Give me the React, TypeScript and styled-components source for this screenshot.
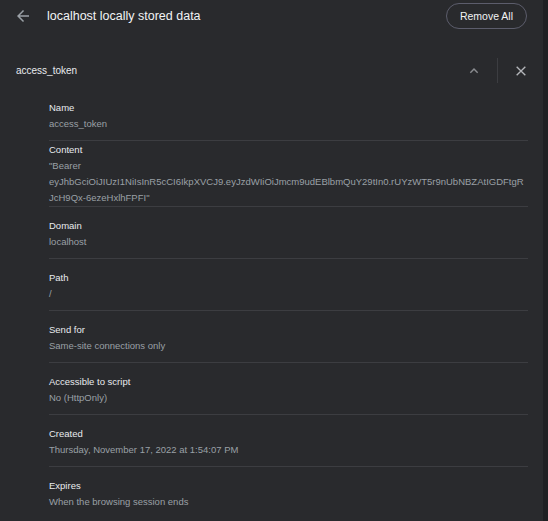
import styled, { createGlobalStyle } from "styled-components"

const GlobalStyle = createGlobalStyle`
    html, body {
        margin: 0;
        background: #292a2d;
    }
    body {
        font-family: "Liberation Sans", Arial, sans-serif;
        -webkit-font-smoothing: antialiased;
    }
`

const Page = styled.div`
    display: flex;
    min-height: 100vh;
`

const Main = styled.div`
    flex: 1;
    min-width: 0;
`

const ScrollTrack = styled.div`
    width: 5px;
    background: #1f2023;
`

const Header = styled.header`
    display: flex;
    align-items: center;
    height: 31px;
    padding: 0 16px 0 14px;
`

const IconButton = styled.button<{ $color?: string }>`
    display: flex;
    align-items: center;
    justify-content: center;
    width: 24px;
    height: 24px;
    padding: 0;
    border: none;
    background: none;
    color: ${p => p.$color || "#9aa0a6"};
    cursor: pointer;
`

const BackButton = styled(IconButton)`
    width: 18px;
    height: 18px;
`

const Title = styled.h1`
    flex: 1;
    margin: 0 0 0 15px;
    font-size: 12.5px;
    font-weight: 500;
    color: #f1f3f4;
`

const RemoveAllButton = styled.button`
    height: 26px;
    padding: 0 13px;
    border: 1px solid #5c5d6c;
    border-radius: 13px;
    background: none;
    font-family: inherit;
    font-size: 10.5px;
    color: #f1f3f4;
    cursor: pointer;
`

const CookieHead = styled.div`
    display: flex;
    align-items: center;
    height: 25px;
    margin-top: 27px;
    padding: 0 10px 0 16px;
`

const CookieName = styled.span`
    flex: 1;
    font-size: 10px;
    color: #e8eaed;
`

const VDivider = styled.span`
    width: 1px;
    height: 25px;
    margin: 0 11px;
    background: #3c3d41;
`

const Details = styled.dl`
    margin: 0;
    padding: 5px 15px 0 49px;
`

const Row = styled.div<{ $compact?: boolean }>`
    padding: ${p => (p.$compact ? "1px 0 0" : "11px 0 8px")};
    border-top: 1px solid #3c3d41;
    font-size: 9.5px;
    line-height: 16px;

    &:first-child {
        padding-top: 12px;
        border-top: none;
    }
`

const Label = styled.dt`
    color: #e8eaed;
`

const Value = styled.dd`
    margin: 0;
    color: #9aa0a6;
`

const ValueLine = styled.div`
    white-space: nowrap;
`

const ArrowBack = () => (
    <svg width="18" height="18" viewBox="0 0 24 24" fill="currentColor">
        <path d="M20 11H7.83l5.59-5.59L12 4l-8 8 8 8 1.41-1.41L7.83 13H20v-2z" />
    </svg>
)

const ChevronUp = () => (
    <svg width="16" height="16" viewBox="0 0 24 24" fill="none" stroke="currentColor" strokeWidth="2.2">
        <path d="M6.5 14.5L12 9l5.5 5.5" />
    </svg>
)

const Close = () => (
    <svg width="16" height="16" viewBox="0 0 24 24" fill="none" stroke="currentColor" strokeWidth="2">
        <path d="M5.5 5.5l13 13M18.5 5.5l-13 13" />
    </svg>
)

const fields: { label: string; value: string[]; compact?: boolean }[] = [
    { label: "Name", value: ["access_token"] },
    {
        label: "Content",
        compact: true,
        value: [
            "\"Bearer",
            "eyJhbGciOiJIUzI1NiIsInR5cCI6IkpXVCJ9.eyJzdWIiOiJmcm9udEBlbmQuY29tIn0.rUYzWT5r9nUbNBZAtIGDFtgR",
            "JcH9Qx-6ezeHxlhFPFI\"",
        ],
    },
    { label: "Domain", value: ["localhost"] },
    { label: "Path", value: ["/"] },
    { label: "Send for", value: ["Same-site connections only"] },
    { label: "Accessible to script", value: ["No (HttpOnly)"] },
    { label: "Created", value: ["Thursday, November 17, 2022 at 1:54:07 PM"] },
    { label: "Expires", value: ["When the browsing session ends"] },
]

const App = () => {
    return (
        <>
            <GlobalStyle />
            <Page>
                <Main>
                    <Header>
                        <BackButton><ArrowBack /></BackButton>
                        <Title>localhost locally stored data</Title>
                        <RemoveAllButton>Remove All</RemoveAllButton>
                    </Header>
                    <CookieHead>
                        <CookieName>access_token</CookieName>
                        <IconButton $color="#8a8c90"><ChevronUp /></IconButton>
                        <VDivider />
                        <IconButton $color="#b4b6ba"><Close /></IconButton>
                    </CookieHead>
                    <Details>
                        {fields.map(f => (
                            <Row key={f.label} $compact={f.compact}>
                                <Label>{f.label}</Label>
                                <Value>
                                    {f.value.map(line => (
                                        <ValueLine key={line}>{line}</ValueLine>
                                    ))}
                                </Value>
                            </Row>
                        ))}
                    </Details>
                </Main>
                <ScrollTrack />
            </Page>
        </>
    )
}

export default App
